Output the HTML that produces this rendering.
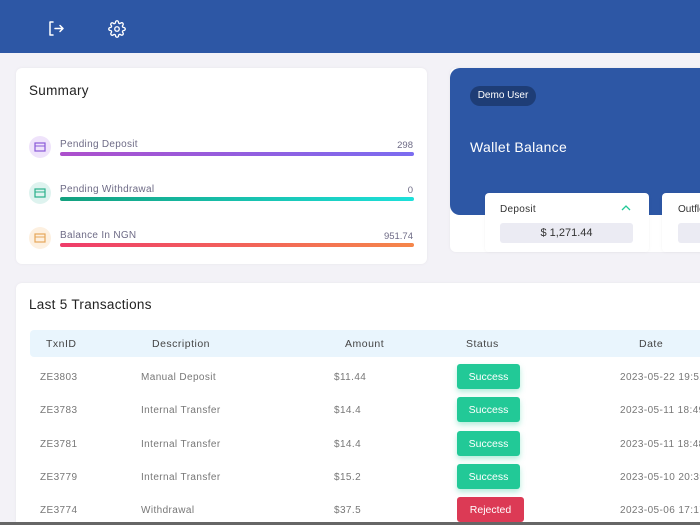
<!DOCTYPE html>
<html style="width:700px;height:525px;overflow:hidden"><head><style>
*{box-sizing:border-box;margin:0;padding:0}
body{width:700px;height:525px;overflow:hidden;background:#f3f2f7;font-family:"Liberation Sans",sans-serif;position:relative}
.hdr{position:absolute;left:0;top:0;width:700px;height:53px;background:#2d57a5}
.card{position:absolute;background:#fff;border-radius:6px;box-shadow:0 0 3px rgba(0,0,0,.05)}
.ic{position:absolute;width:22px;height:22px;border-radius:50%}
.ic svg{position:absolute;left:5px;top:5px}
.lbl{position:absolute;font-size:10px;color:#6e6b86;letter-spacing:.3px}
.val{position:absolute;font-size:9.5px;color:#6e6b86;right:0}
.bar{position:absolute;height:4px;border-radius:2px}
.th{position:absolute;font-size:10.5px;color:#444;letter-spacing:.5px;top:338px}
.td{position:absolute;font-size:10px;color:#777;letter-spacing:.4px}
.b{position:absolute;left:457px;width:63px;height:25px;border-radius:3px;color:#fff;font-size:10.5px;text-align:center;line-height:26px;background:#22c997;box-shadow:0 3px 6px rgba(34,201,151,.35)}
</style></head><body>
<div class="hdr">
<svg style="position:absolute;left:48px;top:20px" width="17" height="17" viewBox="0 0 17 17" fill="none" stroke="#fff" stroke-width="1.5" stroke-linecap="round" stroke-linejoin="round"><path d="M5 2H2v13h3M7 8.5h8M12 5.5l3 3-3 3"/></svg>
<svg style="position:absolute;left:108px;top:20px" width="18" height="18" viewBox="0 0 24 24" fill="none" stroke="#fff" stroke-width="1.8" stroke-linejoin="round"><circle cx="12" cy="12" r="3"/><path d="M19.4 15a1.65 1.65 0 0 0 .33 1.82l.06.06a2 2 0 1 1-2.83 2.83l-.06-.06a1.65 1.65 0 0 0-1.82-.33 1.65 1.65 0 0 0-1 1.51V21a2 2 0 1 1-4 0v-.09A1.65 1.65 0 0 0 9 19.4a1.65 1.65 0 0 0-1.82.33l-.06.06a2 2 0 1 1-2.83-2.83l.06-.06A1.65 1.65 0 0 0 4.68 15a1.65 1.65 0 0 0-1.51-1H3a2 2 0 1 1 0-4h.09A1.65 1.65 0 0 0 4.6 9a1.65 1.65 0 0 0-.33-1.82l-.06-.06a2 2 0 1 1 2.83-2.83l.06.06A1.65 1.65 0 0 0 9 4.68a1.65 1.65 0 0 0 1-1.51V3a2 2 0 1 1 4 0v.09a1.65 1.65 0 0 0 1 1.51 1.65 1.65 0 0 0 1.82-.33l.06-.06a2 2 0 1 1 2.83 2.83l-.06.06A1.65 1.65 0 0 0 19.4 9a1.65 1.65 0 0 0 1.51 1H21a2 2 0 1 1 0 4h-.09a1.65 1.65 0 0 0-1.51 1z"/></svg>
</div>
<div class="card" style="left:16px;top:68px;width:411px;height:196px">
<div style="position:absolute;left:13px;top:15px;font-size:13.5px;color:#222;letter-spacing:.3px">Summary</div>
<div class="ic" style="left:13px;top:68px;background:#efe3fb"><svg width="12" height="12"><rect x="1" y="2" width="10" height="8" fill="none" stroke="#8a5ad8" stroke-width="1.2"/><path d="M1 5h10" stroke="#8a5ad8"/></svg></div>
<div class="lbl" style="left:44px;top:71px">Pending Deposit</div><div class="val" style="right:14px;top:72px">298</div>
<div class="bar" style="left:44px;top:84px;width:354px;background:linear-gradient(90deg,#ad4fcc,#7b6cf0)"></div>
<div class="ic" style="left:13px;top:114px;background:#def3ef"><svg width="12" height="12"><rect x="1" y="2" width="10" height="8" fill="none" stroke="#28b08a" stroke-width="1.2"/><path d="M1 5h10" stroke="#28b08a"/></svg></div>
<div class="lbl" style="left:44px;top:116px">Pending Withdrawal</div><div class="val" style="right:14px;top:117px">0</div>
<div class="bar" style="left:44px;top:129px;width:354px;background:linear-gradient(90deg,#13a07e,#1de0da)"></div>
<div class="ic" style="left:13px;top:159px;background:#fdf0e0"><svg width="12" height="12"><rect x="1" y="2" width="10" height="8" fill="none" stroke="#e6a75a" stroke-width="1.2"/><path d="M1 5h10" stroke="#e6a75a"/></svg></div>
<div class="lbl" style="left:44px;top:162px">Balance In NGN</div><div class="val" style="right:14px;top:163px">951.74</div>
<div class="bar" style="left:44px;top:175px;width:354px;background:linear-gradient(90deg,#ef3c6a,#f5864a)"></div>
</div>
<div class="card" style="left:450px;top:68px;width:260px;height:184px"></div>
<div style="position:absolute;left:450px;top:68px;width:260px;height:147px;background:#2d57a5;border-radius:10px 0 0 10px"></div>
<div style="position:absolute;left:470px;top:86px;width:66px;height:20px;border-radius:10px;background:#1e3d76;color:#fff;font-size:10px;line-height:20px;text-align:center">Demo User</div>
<div style="position:absolute;left:470px;top:139px;color:#fff;font-size:14px;letter-spacing:.3px">Wallet Balance</div>
<div class="card" style="left:485px;top:193px;width:164px;height:59px;border-radius:4px">
<div style="position:absolute;left:15px;top:11px;font-size:10px;color:#333;letter-spacing:.3px">Deposit</div>
<svg style="position:absolute;left:136px;top:12px" width="10" height="7"><path d="M1 5l4-4 4 4" fill="none" stroke="#22c997" stroke-width="1.3"/></svg>
<div style="position:absolute;left:15px;top:30px;width:133px;height:20px;background:#ebebf3;border-radius:3px;text-align:center;line-height:20px;font-size:11px;color:#333">$ 1,271.44</div>
</div>
<div class="card" style="left:662px;top:193px;width:60px;height:59px;border-radius:4px">
<div style="position:absolute;left:16px;top:11px;font-size:10px;color:#333">Outflow</div>
<div style="position:absolute;left:16px;top:30px;width:60px;height:20px;background:#ebebf3;border-radius:3px"></div>
</div>
<div class="card" style="left:16px;top:283px;width:700px;height:242px;border-radius:6px 6px 0 0">
<div style="position:absolute;left:13px;top:14px;font-size:13.5px;color:#222;letter-spacing:.3px">Last 5 Transactions</div>
<div style="position:absolute;left:14px;top:47px;width:680px;height:27px;background:#e9f5fd;border-radius:4px"></div>
</div>
<div class="th" style="left:46px">TxnID</div><div class="th" style="left:152px">Description</div><div class="th" style="left:345px">Amount</div><div class="th" style="left:466px">Status</div><div class="th" style="left:639px">Date</div>
<div class="td" style="left:40px;top:372px">ZE3803</div><div class="td" style="left:141px;top:372px">Manual Deposit</div><div class="td" style="left:334px;top:372px">$11.44</div><div class="b" style="top:364px">Success</div><div class="td" style="left:620px;top:372px;white-space:nowrap">2023-05-22 19:52</div>
<div class="td" style="left:40px;top:405px">ZE3783</div><div class="td" style="left:141px;top:405px">Internal Transfer</div><div class="td" style="left:334px;top:405px">$14.4</div><div class="b" style="top:397px">Success</div><div class="td" style="left:620px;top:405px;white-space:nowrap">2023-05-11 18:49:</div>
<div class="td" style="left:40px;top:439px">ZE3781</div><div class="td" style="left:141px;top:439px">Internal Transfer</div><div class="td" style="left:334px;top:439px">$14.4</div><div class="b" style="top:431px">Success</div><div class="td" style="left:620px;top:439px;white-space:nowrap">2023-05-11 18:48:</div>
<div class="td" style="left:40px;top:472px">ZE3779</div><div class="td" style="left:141px;top:472px">Internal Transfer</div><div class="td" style="left:334px;top:472px">$15.2</div><div class="b" style="top:464px">Success</div><div class="td" style="left:620px;top:472px;white-space:nowrap">2023-05-10 20:39</div>
<div class="td" style="left:40px;top:505px">ZE3774</div><div class="td" style="left:141px;top:505px">Withdrawal</div><div class="td" style="left:334px;top:505px">$37.5</div><div class="b" style="top:497px;width:67px;background:#dc3a55;box-shadow:none">Rejected</div><div class="td" style="left:620px;top:505px;white-space:nowrap">2023-05-06 17:17</div>
<div style="position:absolute;left:0;top:522px;width:700px;height:3px;background:#666"></div>
</body></html>
